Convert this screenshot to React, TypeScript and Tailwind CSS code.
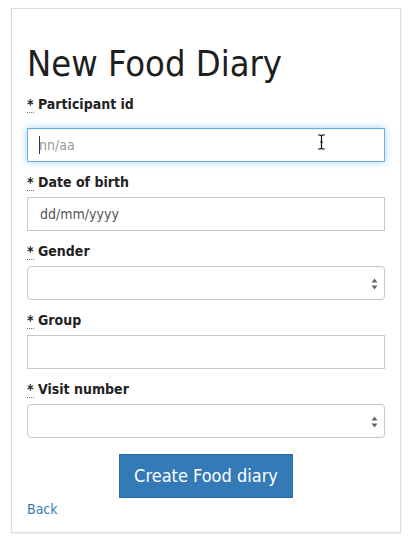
import React from "react";

const font = { fontFamily: '"DejaVu Sans Condensed", "DejaVu Sans", Verdana, sans-serif', fontStretch: "condensed" as const };

function Label({ text, mb = "mb-[5px]" }: { text: string; mb?: string }) {
  return (
    <label className={`block h-[20px] text-[14px] leading-[20px] font-bold text-[#222] ${mb}`}>
      <abbr className="no-underline border-b border-dotted border-[#777] cursor-help" title="required">*</abbr>{" "}
      {text}
    </label>
  );
}

function SelectArrows() {
  return (
    <svg width="7" height="12" viewBox="0 0 7 12" className="absolute right-[6px] top-[11px]">
      <path d="M3.5 0.5 L6.5 4.5 L0.5 4.5 Z" fill="#666" />
      <path d="M3.5 11.5 L6.5 7.5 L0.5 7.5 Z" fill="#666" />
    </svg>
  );
}

export default function App() {
  return (
    <div className="w-[410px] h-[542px] bg-white pt-[8px] pl-[11px]" style={font}>
      <div className="w-[390px] h-[525px] border border-[#dcdcdc] shadow-[0_1px_2px_rgba(0,0,0,0.08)] px-[15px]">
        <h1 className="mt-[35px] mb-[10px] text-[36px] leading-[40px] font-normal text-[#1e1e1e]">New Food Diary</h1>
        <div>
          <Label text="Participant id" mb="mb-[14px]" />
          <div className="relative h-[34px] border border-[#66afe9] shadow-[inset_0_1px_1px_rgba(0,0,0,0.075),0_0_8px_rgba(102,175,233,0.6)] flex items-center pl-[11px] text-[14px] text-[#999]">
            <span className="w-px h-[18px] bg-[#333] mr-[-1px]" />
            <span>nn/aa</span>
            <svg width="9" height="16" viewBox="0 0 9 16" className="absolute left-[289px] top-[5px]">
              <path d="M1 1 H3.5 L4.5 2 L5.5 1 H8 M4.5 2 V14 M1 15 H3.5 L4.5 14 L5.5 15 H8 M3 8 H6" stroke="#111" strokeWidth="1.2" fill="none" />
            </svg>
          </div>
        </div>
        <div className="mt-[10px]">
          <Label text="Date of birth" />
          <div className="h-[34px] border border-[#c8c8c8] flex items-center pl-[12px] text-[14px] text-[#555]">dd/mm/yyyy</div>
        </div>
        <div className="mt-[10px]">
          <Label text="Gender" />
          <div className="relative h-[34px] border border-[#c8c8c8] rounded-[4px] bg-white">
            <SelectArrows />
          </div>
        </div>
        <div className="mt-[10px]">
          <Label text="Group" />
          <div className="h-[34px] border border-[#c8c8c8]" />
        </div>
        <div className="mt-[10px]">
          <Label text="Visit number" />
          <div className="relative h-[34px] border border-[#c8c8c8] rounded-[4px] bg-white">
            <SelectArrows />
          </div>
        </div>
        <div className="flex justify-center mt-[16px]">
          <button className="w-[174px] h-[44px] bg-[#337ab7] border border-[#2e6da4] text-white text-[18px] leading-[24px]" style={font}>
            Create Food diary
          </button>
        </div>
        <a href="#" className="block mt-[1px] text-[14px] leading-[20px] text-[#337ab7]">Back</a>
      </div>
    </div>
  );
}
